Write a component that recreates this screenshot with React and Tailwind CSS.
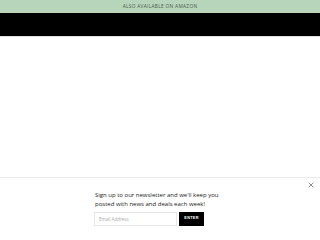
import { X } from "lucide-react";

export default function App() {
  return (
    <div className="flex flex-col w-[320px] h-[240px] bg-white overflow-hidden" style={{ fontFamily: '"Liberation Sans", Arial, sans-serif' }}>
      {/* Announcement bar */}
      <div className="h-[13px] bg-[#b7d5ba] flex items-center justify-center">
        <span className="text-[4.8px] tracking-[0.3px] text-[#4a5a4c] uppercase" style={{ fontFamily: '"Open Sans", sans-serif' }}>
          Also available on Amazon
        </span>
      </div>

      {/* Header */}
      <div className="h-[23px] bg-black" />
      <div className="h-px bg-[#e2e2e2]" />

      {/* Page body (hidden behind overlay) */}
      <div className="flex-1" />

      {/* Newsletter popup */}
      <div className="h-[63px] border-t border-[#ececec] bg-white flex flex-col pl-[95px] pr-[5px] pt-[3px]">
        <div className="flex justify-end h-[10px]">
          <X className="w-[8px] h-[8px] text-[#555]" strokeWidth={2} />
        </div>
        <p className="text-[6px] leading-[9px] text-[#222] w-[126px]" style={{ fontFamily: '"Open Sans", sans-serif' }}>
          Sign up to our newsletter and we'll keep you posted with news and deals each week!
        </p>
        <div className="flex gap-[2px] mt-[3px] -ml-px">
          <div className="w-[83px] h-[14px] border border-[#e6e6e6] flex items-center px-[4px]">
            <span className="text-[4.5px] text-[#aaa]" style={{ fontFamily: '"Open Sans", sans-serif' }}>Email Address</span>
          </div>
          <div className="w-[25px] h-[14px] bg-black flex items-center justify-center">
            <span className="text-[3.8px] font-bold text-white tracking-[0.3px]">ENTER</span>
          </div>
        </div>
      </div>
    </div>
  );
}
